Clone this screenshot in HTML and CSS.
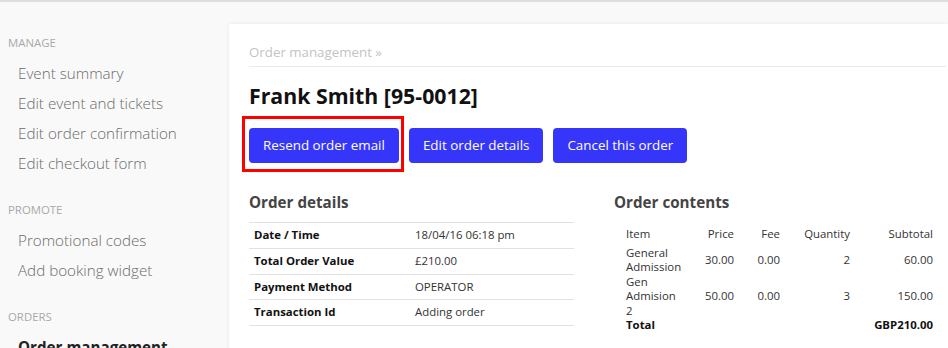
FILE: index.html
```html
<!DOCTYPE html>
<html lang="en">
<head>
    <meta charset="UTF-8">
    <title>Order management</title>
    <link rel="stylesheet" href="styles.css">
</head>
<body>
    <div class="layout">
        <!-- Sidebar -->
        <nav class="sidebar">
            <h4>MANAGE</h4>
            <ul>
                <li>Event summary</li>
                <li>Edit event and tickets</li>
                <li>Edit order confirmation</li>
                <li>Edit checkout form</li>
            </ul>
            <h4>PROMOTE</h4>
            <ul>
                <li>Promotional codes</li>
                <li>Add booking widget</li>
            </ul>
            <h4>ORDERS</h4>
            <ul>
                <li class="active">Order management</li>
            </ul>
        </nav>

        <!-- Main panel -->
        <main class="panel">
            <div class="breadcrumb">Order management &raquo;</div>
            <h1>Frank Smith [95-0012]</h1>

            <div class="actions">
                <button class="btn highlight">Resend order email</button>
                <button class="btn">Edit order details</button>
                <button class="btn">Cancel this order</button>
            </div>

            <div class="columns">
                <section>
                    <h2>Order details</h2>
                    <table class="details">
                        <tr><th>Date / Time</th><td>18/04/16 06:18 pm</td></tr>
                        <tr><th>Total Order Value</th><td>&pound;210.00</td></tr>
                        <tr><th>Payment Method</th><td>OPERATOR</td></tr>
                        <tr><th>Transaction Id</th><td>Adding order</td></tr>
                    </table>
                </section>

                <section>
                    <h2>Order contents</h2>
                    <table class="contents">
                        <colgroup>
                            <col class="c-item"><col class="c-price"><col class="c-fee"><col class="c-qty"><col class="c-sub">
                        </colgroup>
                        <thead>
                            <tr><th>Item</th><th>Price</th><th>Fee</th><th>Quantity</th><th>Subtotal</th></tr>
                        </thead>
                        <tbody>
                            <tr><td>General Admission</td><td>30.00</td><td>0.00</td><td>2</td><td>60.00</td></tr>
                            <tr><td>Gen Admision 2</td><td>50.00</td><td>0.00</td><td>3</td><td>150.00</td></tr>
                            <tr class="total"><td>Total</td><td></td><td></td><td></td><td>GBP210.00</td></tr>
                        </tbody>
                    </table>
                </section>
            </div>
        </main>
    </div>
</body>
</html>
```
FILE: styles.css
```css
/* General Styles */
body {
    margin: 0;
    font-family: 'Open Sans', Arial, sans-serif;
    background: #f9f9f9;
    border-top: 2px solid #dedede;
    color: #333;
    overflow: hidden;
}

.layout {
    display: flex;
    align-items: flex-start;
}

/* Sidebar */
.sidebar {
    width: 229px;
    flex-shrink: 0;
    padding-top: 33px;
}

.sidebar h4 {
    margin: 0 0 7px 8px;
    font-size: 11.4px;
    line-height: 16px;
    font-weight: 400;
    color: #a9a9a9;
}

.sidebar ul {
    list-style: none;
    margin: 0 0 24px;
    padding: 0 0 0 18px;
}

.sidebar li {
    font-size: 15.2px;
    line-height: 30px;
    font-weight: 300;
    color: #6b6b6b;
    white-space: nowrap;
}

.sidebar li.active {
    font-weight: 700;
    color: #222;
}

/* Main panel */
.panel {
    flex: 1;
    margin-top: 22px;
    min-height: 400px;
    background: #fff;
    box-shadow: 0 0 4px rgba(0, 0, 0, 0.07);
    padding: 19px 2px 0 20px;
}

.breadcrumb {
    font-size: 13.3px;
    line-height: 18px;
    color: #c4c4c4;
    padding-bottom: 5px;
    border-bottom: 1px solid #ebebeb;
}

.panel h1 {
    margin: 15px 0 0;
    font-size: 21.3px;
    line-height: 28px;
    font-weight: 700;
    color: #111;
}

.actions {
    display: flex;
    gap: 10px;
    margin-top: 18px;
}

.btn {
    font-family: inherit;
    font-size: 13.4px;
    line-height: 19px;
    font-weight: 500;
    padding: 8px 14px;
    border: none;
    border-radius: 4px;
    background: #3636fa;
    color: #fff;
    cursor: pointer;
}

.highlight {
    position: relative;
}

.highlight::after {
    content: "";
    position: absolute;
    top: -12px;
    bottom: -9px;
    left: -7px;
    right: -5px;
    border: 3px solid #f00;
    pointer-events: none;
}

/* Detail sections */
.columns {
    display: grid;
    grid-template-columns: 325px 1fr;
    gap: 40px;
    margin-top: 29px;
}

.columns h2 {
    margin: 0;
    font-size: 15.2px;
    line-height: 20px;
    font-weight: 700;
    color: #444;
}

.details {
    width: 100%;
    margin-top: 10px;
    border-collapse: collapse;
    table-layout: fixed;
    font-size: 11.4px;
}

.details th,
.details td {
    text-align: left;
    padding: 4px 5px;
    line-height: 16.75px;
    border-top: 1px solid #e2e2e2;
    border-bottom: 1px solid #e2e2e2;
}

.details th {
    width: 151px;
    font-weight: 700;
    color: #111;
}

.details td {
    color: #333;
}

.contents {
    width: 307px;
    margin: 15px 0 0 12px;
    border-collapse: collapse;
    table-layout: fixed;
    font-size: 11.4px;
    color: #333;
}

.c-item { width: 57px; }
.c-price { width: 51px; }
.c-fee { width: 46px; }
.c-qty { width: 70px; }
.c-sub { width: 83px; }

.contents th,
.contents td {
    padding: 0;
    line-height: 14.5px;
    text-align: right;
    font-weight: 400;
    vertical-align: middle;
}

.contents th {
    padding-bottom: 4px;
}

.contents th:first-child,
.contents td:first-child {
    text-align: left;
}

.contents .total td {
    font-weight: 700;
    color: #111;
}
```
